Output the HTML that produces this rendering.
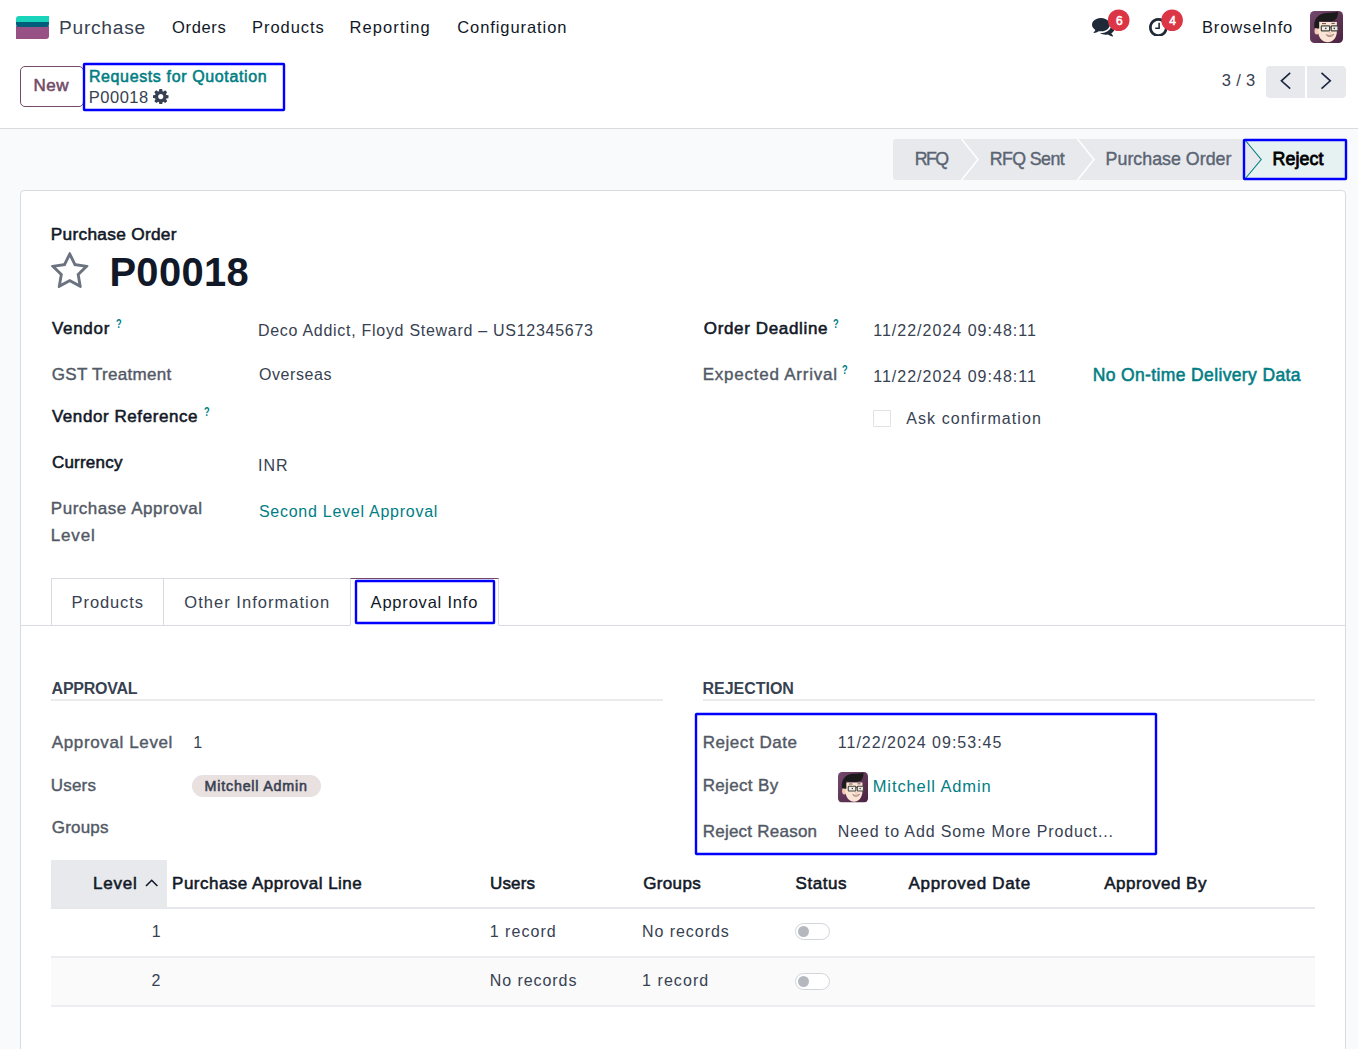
<!DOCTYPE html>
<html lang="en">
<head>
<meta charset="utf-8">
<title>Odoo - P00018</title>
<style>
*{box-sizing:border-box;margin:0;padding:0}
html,body{width:1358px;height:1049px;overflow:hidden}
body{position:relative;background:#f9fafb;font-family:"Liberation Sans",sans-serif;color:#374151}
.abs,.t,svg{position:absolute}
.t{white-space:pre;line-height:20px;display:block}
.top{left:0;top:0;width:1358px;height:128px;background:#fff}
.hline{left:0;top:128px;width:1358px;height:1px;background:#d9dbde}
.btn-new{left:20px;top:66px;width:64px;height:41px;border:1px solid #714B67;border-radius:5px;background:#fff}
.pgbtn{top:66px;height:32px;width:39px;background:#e7e9ed}
.sheet{left:20px;top:190px;width:1326px;height:900px;background:#fff;border:1px solid #d9dbe0;border-radius:4px}
.tab{top:578px;height:48px;border:1px solid #d9dbe0;background:#fff}
.uline{height:1px;background:#d9dbe0}
.tag{left:192px;top:775px;width:129px;height:22px;border-radius:12px;background:#e9e0e0}
.chk{left:873px;top:410px;width:18px;height:17px;border:1px solid #dfe1e5;border-radius:1px;background:#fff}
.tog{left:795px;width:35px;height:17px;border:1px solid #d1d5db;border-radius:9px;background:#fff}
.tog i{position:absolute;left:2px;top:2px;width:11px;height:11px;border-radius:50%;background:#b5b9bf}
</style>
</head>
<body>
<!-- ===== top bars ===== -->
<div class="abs top"></div>
<div class="abs hline"></div>
<div class="abs sheet"></div>

<!-- app logo -->
<svg style="left:16px;top:16px" width="33" height="23" viewBox="0 0 33 23">
  <path d="M0 10 H33 V20 a3 3 0 0 1 -3 3 H0 Z" fill="#985184"/>
  <path d="M0 5 H33 V8 a3 3 0 0 1 -3 3 H3 a3 3 0 0 1 -3 -3 Z" fill="#005E7A"/>
  <path d="M3 0 H33 V6 H0 V3 a3 3 0 0 1 3 -3 Z" fill="#1AD3BB"/>
</svg>

<!-- systray icons -->
<svg style="left:1092.1px;top:18.3px" width="22.70" height="18.40" viewBox="0.0 256.0 1792.0 1408.1" preserveAspectRatio="none"><path fill="#1f2937" d="M1408 768q0 139-94 257t-256.500 186.500-353.500 68.500q-86 0-176-16-124 88-278 128-36 9-86 16h-3q-11 0-20.500-8t-11.500-21q-1-3-1-6.500t.5-6.500 2-6l2.500-5t3.500-5.500 4-5 4.500-5 4-4.500q5-6 23-25t26-29.500 22.500-29 25-38.500 20.500-44q-124-72-195-177t-71-224q0-139 94-257t256.500-186.500 353.500-68.500 353.500 68.500 256.500 186.500 94 257zm384 256q0 120-71 224.500t-195 176.500q10 24 20.500 44t25 38.500 22.500 29 26 29.500 23 25q1 1 4 4.500t4.500 5 4 5 3.500 5.500l2.500 5t2 6 .5 6.500-1 6.500q-3 14-13 22t-22 7q-50-7-86-16-154-40-278-128-90 16-176 16-271 0-472-132 58 4 88 4 161 0 309-45t264-129q125-92 192-212t67-254q0-77-23-152 129 71 204 178t75 230z"/></svg>
<svg style="left:1148.6px;top:17.6px" width="18.70" height="18.90" viewBox="128.0 128.0 1536.0 1536.0" preserveAspectRatio="none"><path fill="#1f2937" d="M1024 544v448q0 14-9 23t-23 9h-320q-14 0-23-9t-9-23v-64q0-14 9-23t23-9h224v-352q0-14 9-23t23-9h64q14 0 23 9t9 23zm416 352q0-148-73-273t-198-198-273-73-273 73-198 198-73 273 73 273 198 198 273 73 273-73 198-198 73-273zm224 0q0 209-103 385.500t-279.500 279.500-385.500 103-385.500-103-279.500-279.500-103-385.500 103-385.500 279.500-279.500 385.500-103 385.500 103 279.500 279.500 103 385.500z"/></svg>
<svg style="left:153.1px;top:88.9px" width="15.50" height="15.30" viewBox="128.0 128.0 1536.0 1536.0" preserveAspectRatio="none"><path fill="#374151" d="M1152 896q0-106-75-181t-181-75-181 75-75 181 75 181 181 75 181-75 75-181zm512-109v222q0 12-8 23t-20 13l-185 28q-19 54-39 91 35 50 107 138 10 12 10 25t-9 23q-27 37-99 108t-94 71q-12 0-26-9l-138-108q-44 23-91 38-16 136-29 186-7 28-36 28h-222q-14 0-24.500-8.500t-11.500-21.500l-28-184q-49-16-90-37l-141 107q-10 9-25 9-14 0-25-11-126-114-165-168-7-10-7-23 0-12 8-23 15-21 51-66.500t54-70.500q-27-50-41-99l-183-27q-13-2-21-12.500t-8-23.500v-222q0-12 8-23t19-13l186-28q14-46 39-92-40-57-107-138-10-12-10-24 0-10 9-23 26-36 98.500-107.500t94.500-71.500q13 0 26 10l138 107q44-23 91-38 16-136 29-186 7-28 36-28h222q14 0 24.500 8.500t11.500 21.500l28 184q49 16 90 37l142-107q9-9 24-9 13 0 25 10 129 119 165 170 7 8 7 22 0 12-8 23-15 21-51 66.500t-54 70.500q26 50 41 98l183 28q13 2 21 12.500t8 23.500z"/></svg>
<svg style="left:51.2px;top:252.0px" width="37.50" height="36.00" viewBox="64.0 32.0 1664.0 1587.0" preserveAspectRatio="none"><path fill="#6b7280" d="M1201 1004l306-297-422-62-189-382-189 382-422 62 306 297-73 421 378-199 377 199zm527-357q0 22-26 48l-363 354 86 500q1 7 1 20 0 50-41 50-19 0-40-12l-449-236-449 236q-22 12-40 12-21 0-31.500-14.500t-10.500-35.500q0-6 2-20l86-500-364-354q-25-27-25-48 0-37 56-46l502-73 225-455q19-41 49-41t49 41l225 455 502 73q56 9 56 46z"/></svg>
<svg style="left:1100px;top:5px" width="90" height="32" viewBox="0 0 90 32">
  <circle cx="18.700" cy="15.250" r="10.800" fill="#dc3545"/>
  <circle cx="72.100" cy="15.250" r="10.800" fill="#dc3545"/>
</svg>

<!-- user avatar -->
<svg style="left:1310px;top:11px" width="33" height="32" viewBox="0 0 33 32">
  <defs>
    <linearGradient id="avbg" x1="0" y1="0" x2="1" y2="1"><stop offset="0" stop-color="#74496f"/><stop offset="1" stop-color="#4b223e"/></linearGradient>
    <clipPath id="avclip"><rect width="33" height="32" rx="4.500"/></clipPath>
    <g id="avface" clip-path="url(#avclip)">
      <rect width="33" height="32" fill="url(#avbg)"/>
      <ellipse cx="6.900" cy="20" rx="2.400" ry="3.500" fill="#f2cbb2"/>
      <path d="M8.200 11 H26.900 V20 C26.900 27 22.500 31.300 17.700 31.300 C12.600 31.300 8.200 27 8.200 20 Z" fill="#fbe4d3"/>
      <path d="M4.300 16.600 C3.400 8 8 2.600 16 1.900 C21 1.500 25 1.600 27.800 0.400 C28.600 4.200 27 7.600 24.500 9.400 C19 11.200 13 10.600 9.200 9.900 L9.200 17.600 C7 17.600 5 17.300 4.300 16.600 Z" fill="#1b1b1b"/>
      <path d="M12 12.600 h4 M21.500 12.400 h3.300" stroke="#3a2a25" stroke-width="0.800"/>
      <rect x="11.300" y="14.900" width="8.300" height="5" rx="0.700" fill="#f1ebe6" stroke="#45453f" stroke-width="1.200"/>
      <rect x="21.200" y="14.900" width="6.800" height="5" rx="0.700" fill="#f1ebe6" stroke="#45453f" stroke-width="1.200"/>
      <path d="M19.600 16.200 h1.600" stroke="#45453f" stroke-width="1"/>
      <circle cx="15.800" cy="17.400" r="0.800" fill="#3b3b3b"/><circle cx="24.300" cy="17.400" r="0.800" fill="#3b3b3b"/>
      <path d="M18.800 21.700 q1.300 0.700 2.600 0" fill="none" stroke="#e2a995" stroke-width="0.700"/>
      <path d="M16.200 23.700 C18.500 24.900 21.500 24.700 23.700 23.200 C22.600 26 18 26.500 16.200 23.700 Z" fill="#fff" stroke="#7d4d44" stroke-width="0.600"/>
    </g>
  </defs>
  <use href="#avface"/>
</svg>

<!-- control panel -->
<div class="abs btn-new"></div>
<div class="abs pgbtn" style="left:1266px;border-radius:4px 0 0 4px"></div>
<div class="abs pgbtn" style="left:1307px;border-radius:0 4px 4px 0"></div>
<svg style="left:1266px;top:66px" width="80" height="32" viewBox="0 0 80 32">
  <path d="M24.200 6.900 L15.400 14.800 L24.200 22.700" fill="none" stroke="#1b2440" stroke-width="1.600"/>
  <path d="M55.500 6.900 L64.300 14.800 L55.500 22.700" fill="none" stroke="#1b2440" stroke-width="1.600"/>
</svg>

<!-- status bar -->
<svg style="left:893px;top:139px" width="454" height="41" viewBox="0 0 454 41">
  <path d="M3 0 H372 V41 H3 a3 3 0 0 1 -3 -3 V3 a3 3 0 0 1 3 -3 Z" fill="#e7e9ed"/>
  <path d="M352.400 0 L368.200 20.500 L352.400 41 H454 V0 Z" fill="#e6f1f2"/>
  <path d="M68.500 0 L85 20.500 L68.500 41" fill="none" stroke="#fff" stroke-width="1.500"/>
  <path d="M184.500 0 L201 20.500 L184.500 41" fill="none" stroke="#fff" stroke-width="1.500"/>
  <path d="M352.400 1.500 L368.200 20.500 L352.400 39.500" fill="none" stroke="#017e84" stroke-width="1.100"/>
</svg>

<!-- form sheet -->
<div class="abs chk"></div>

<!-- notebook tabs -->
<div class="abs uline" style="left:21px;top:625px;width:1324px"></div>
<div class="abs tab" style="left:51px;width:113px"></div>
<div class="abs tab" style="left:163px;width:188px"></div>
<div class="abs tab" style="left:350px;width:149px;border-top:1px solid #714B67;border-bottom-color:#fff"></div>

<!-- group separators -->
<div class="abs uline" style="left:51px;top:699px;width:612px;height:2px;background:#ebebed"></div>
<div class="abs uline" style="left:703px;top:699px;width:612px;height:2px;background:#ebebed"></div>
<div class="abs tag"></div>

<!-- small avatar -->
<svg style="left:838px;top:772px" width="30" height="30.500" viewBox="0 0 33 32" preserveAspectRatio="none">
  <use href="#avface"/>
</svg>

<!-- approval lines table -->
<div class="abs" style="left:51px;top:860px;width:116px;height:47px;background:#e7e9ed"></div>
<div class="abs" style="left:51px;top:958px;width:1264px;height:48px;background:#fafafa"></div>
<div class="abs uline" style="left:51px;top:907px;width:1264px;height:2px;background:#e6e8ec"></div>
<div class="abs uline" style="left:51px;top:956px;width:1264px;height:2px;background:#ecedf0"></div>
<div class="abs uline" style="left:51px;top:1005px;width:1264px;height:2px;background:#ecedf0"></div>
<svg style="left:144px;top:877px" width="16" height="12" viewBox="0 0 16 12">
  <path d="M2 9 L7.700 3.300 L13.400 9" fill="none" stroke="#111827" stroke-width="1.600"/>
</svg>
<div class="abs tog" style="top:923px"><i></i></div>
<div class="abs tog" style="top:972.500px"><i></i></div>

<!-- highlight outlines -->
<svg style="left:0;top:0" width="1358" height="1049" viewBox="0 0 1358 1049" fill="none" stroke="#0000ff" stroke-width="2.4" stroke-linejoin="round">
  <rect x="84" y="64" width="200" height="46" rx="0.5"/>
  <rect x="1244" y="140" width="102" height="39" rx="0.5"/>
  <rect x="356" y="581" width="138" height="42" rx="0.5"/>
  <rect x="696" y="714" width="460" height="140" rx="0.5"/>
</svg>

<!-- ===== text ===== -->
<span class="t" style="left:59.00px;top:18px;font-size:19.2px;color:#374151;letter-spacing:0.730px;">Purchase</span>
<span class="t" style="left:172.00px;top:17px;font-size:16.5px;color:#111827;letter-spacing:0.665px;">Orders</span>
<span class="t" style="left:252.00px;top:17px;font-size:16.5px;color:#111827;letter-spacing:0.948px;">Products</span>
<span class="t" style="left:349.50px;top:17px;font-size:16.5px;color:#111827;letter-spacing:1.092px;">Reporting</span>
<span class="t" style="left:457.20px;top:17px;font-size:16.5px;color:#111827;letter-spacing:0.928px;">Configuration</span>
<span class="t" style="left:1202.00px;top:17px;font-size:16.5px;color:#111827;letter-spacing:0.860px;">BrowseInfo</span>
<span class="t" style="left:1115.88px;top:11px;font-size:12px;color:#fff;-webkit-text-stroke:0.55px;">6</span>
<span class="t" style="left:1169.18px;top:11px;font-size:12px;color:#fff;-webkit-text-stroke:0.55px;">4</span>
<span class="t" style="left:33.48px;top:76px;font-size:17px;color:#714B67;letter-spacing:0.559px;-webkit-text-stroke:0.55px;">New</span>
<span class="t" style="left:88.88px;top:67px;font-size:16px;color:#017e84;letter-spacing:0.629px;-webkit-text-stroke:0.55px;">Requests for Quotation</span>
<span class="t" style="left:88.80px;top:87px;font-size:16.5px;color:#374151;letter-spacing:0.498px;">P00018</span>
<span class="t" style="left:1221.70px;top:70px;font-size:16.5px;color:#374151;letter-spacing:0.368px;">3 / 3</span>
<span class="t" style="left:914.70px;top:149px;font-size:17.8px;color:#5b6472;letter-spacing:-1.551px;-webkit-text-stroke:0.4px;">RFQ</span>
<span class="t" style="left:989.70px;top:149px;font-size:17.8px;color:#5b6472;letter-spacing:-0.587px;-webkit-text-stroke:0.4px;">RFQ Sent</span>
<span class="t" style="left:1105.60px;top:149px;font-size:17.8px;color:#5b6472;letter-spacing:0.024px;-webkit-text-stroke:0.4px;">Purchase Order</span>
<span class="t" style="left:1272.50px;top:149px;font-size:17.8px;color:#000;letter-spacing:0.108px;-webkit-text-stroke:0.8px;">Reject</span>
<span class="t" style="left:50.77px;top:224px;font-size:17.3px;color:#111827;letter-spacing:0.286px;-webkit-text-stroke:0.55px;">Purchase Order</span>
<span class="t" style="left:109.40px;top:262px;font-size:39.9px;color:#111827;letter-spacing:0.350px;font-weight:700;">P00018</span>
<span class="t" style="left:51.88px;top:319px;font-size:17px;color:#111827;letter-spacing:0.726px;-webkit-text-stroke:0.55px;">Vendor</span>
<span class="t" style="left:116.00px;top:314px;font-size:12.2px;color:#017e84;font-weight:700;transform:scaleX(.76);transform-origin:0 0;">?</span>
<span class="t" style="left:257.90px;top:321px;font-size:16px;color:#374151;letter-spacing:0.718px;">Deco Addict, Floyd Steward – US12345673</span>
<span class="t" style="left:51.80px;top:365px;font-size:17px;color:#525966;letter-spacing:0.284px;-webkit-text-stroke:0.4px;">GST Treatment</span>
<span class="t" style="left:258.90px;top:365px;font-size:16px;color:#374151;letter-spacing:0.590px;">Overseas</span>
<span class="t" style="left:51.88px;top:407px;font-size:17px;color:#111827;letter-spacing:0.571px;-webkit-text-stroke:0.55px;">Vendor Reference</span>
<span class="t" style="left:203.80px;top:402px;font-size:12.2px;color:#017e84;font-weight:700;transform:scaleX(.76);transform-origin:0 0;">?</span>
<span class="t" style="left:51.88px;top:453px;font-size:17px;color:#111827;letter-spacing:0.227px;-webkit-text-stroke:0.55px;">Currency</span>
<span class="t" style="left:257.90px;top:456px;font-size:16px;color:#374151;letter-spacing:1.050px;">INR</span>
<span class="t" style="left:50.80px;top:499px;font-size:17px;color:#525966;letter-spacing:0.528px;-webkit-text-stroke:0.4px;">Purchase Approval</span>
<span class="t" style="left:50.80px;top:526px;font-size:17px;color:#525966;letter-spacing:0.809px;-webkit-text-stroke:0.4px;">Level</span>
<span class="t" style="left:258.90px;top:502px;font-size:16px;color:#017e84;letter-spacing:0.740px;">Second Level Approval</span>
<span class="t" style="left:703.77px;top:319px;font-size:17px;color:#111827;letter-spacing:0.648px;-webkit-text-stroke:0.55px;">Order Deadline</span>
<span class="t" style="left:832.60px;top:314px;font-size:12.2px;color:#017e84;font-weight:700;transform:scaleX(.76);transform-origin:0 0;">?</span>
<span class="t" style="left:873.20px;top:321px;font-size:16px;color:#374151;letter-spacing:1.015px;">11/22/2024 09:48:11</span>
<span class="t" style="left:702.70px;top:365px;font-size:17px;color:#525966;letter-spacing:0.760px;-webkit-text-stroke:0.4px;">Expected Arrival</span>
<span class="t" style="left:842.30px;top:360px;font-size:12.2px;color:#017e84;font-weight:700;transform:scaleX(.76);transform-origin:0 0;">?</span>
<span class="t" style="left:873.20px;top:367px;font-size:16px;color:#374151;letter-spacing:1.015px;">11/22/2024 09:48:11</span>
<span class="t" style="left:1092.68px;top:365px;font-size:17.5px;color:#017e84;letter-spacing:0.366px;-webkit-text-stroke:0.55px;">No On-time Delivery Data</span>
<span class="t" style="left:906.20px;top:409px;font-size:16px;color:#374151;letter-spacing:1.096px;">Ask confirmation</span>
<span class="t" style="left:71.60px;top:592px;font-size:16.5px;color:#374151;letter-spacing:0.891px;">Products</span>
<span class="t" style="left:184.30px;top:592px;font-size:16.5px;color:#374151;letter-spacing:1.030px;">Other Information</span>
<span class="t" style="left:370.60px;top:592px;font-size:16.5px;color:#111827;letter-spacing:0.796px;">Approval Info</span>
<span class="t" style="left:51.60px;top:679px;font-size:16px;color:#374151;letter-spacing:-0.263px;font-weight:700;">APPROVAL</span>
<span class="t" style="left:702.50px;top:679px;font-size:16px;color:#374151;letter-spacing:-0.027px;font-weight:700;">REJECTION</span>
<span class="t" style="left:51.80px;top:733px;font-size:17px;color:#525966;letter-spacing:0.624px;-webkit-text-stroke:0.4px;">Approval Level</span>
<span class="t" style="left:193.30px;top:733px;font-size:16px;color:#374151;">1</span>
<span class="t" style="left:50.80px;top:776px;font-size:17px;color:#525966;letter-spacing:0.177px;-webkit-text-stroke:0.4px;">Users</span>
<span class="t" style="left:204.58px;top:776px;font-size:14.3px;color:#374151;letter-spacing:0.780px;-webkit-text-stroke:0.55px;">Mitchell Admin</span>
<span class="t" style="left:51.80px;top:818px;font-size:17px;color:#525966;letter-spacing:0.190px;-webkit-text-stroke:0.4px;">Groups</span>
<span class="t" style="left:702.70px;top:733px;font-size:17px;color:#525966;letter-spacing:0.554px;-webkit-text-stroke:0.4px;">Reject Date</span>
<span class="t" style="left:837.80px;top:733px;font-size:16px;color:#374151;letter-spacing:0.999px;">11/22/2024 09:53:45</span>
<span class="t" style="left:702.70px;top:776px;font-size:17px;color:#525966;letter-spacing:0.344px;-webkit-text-stroke:0.4px;">Reject By</span>
<span class="t" style="left:872.70px;top:776px;font-size:16.5px;color:#017e84;letter-spacing:0.900px;">Mitchell Admin</span>
<span class="t" style="left:702.70px;top:822px;font-size:17px;color:#525966;letter-spacing:0.238px;-webkit-text-stroke:0.4px;">Reject Reason</span>
<span class="t" style="left:837.80px;top:822px;font-size:16px;color:#374151;letter-spacing:0.872px;">Need to Add Some More Product...</span>
<span class="t" style="left:92.88px;top:874px;font-size:17px;color:#111827;letter-spacing:0.797px;-webkit-text-stroke:0.55px;">Level</span>
<span class="t" style="left:172.08px;top:874px;font-size:17px;color:#111827;letter-spacing:0.481px;-webkit-text-stroke:0.55px;">Purchase Approval Line</span>
<span class="t" style="left:489.97px;top:874px;font-size:17px;color:#111827;letter-spacing:0.164px;-webkit-text-stroke:0.55px;">Users</span>
<span class="t" style="left:643.27px;top:874px;font-size:17px;color:#111827;letter-spacing:0.340px;-webkit-text-stroke:0.55px;">Groups</span>
<span class="t" style="left:795.57px;top:874px;font-size:17px;color:#111827;letter-spacing:0.551px;-webkit-text-stroke:0.55px;">Status</span>
<span class="t" style="left:908.48px;top:874px;font-size:17px;color:#111827;letter-spacing:0.692px;-webkit-text-stroke:0.55px;">Approved Date</span>
<span class="t" style="left:1104.18px;top:874px;font-size:17px;color:#111827;letter-spacing:0.492px;-webkit-text-stroke:0.55px;">Approved By</span>
<span class="t" style="left:151.70px;top:922px;font-size:16px;color:#374151;">1</span>
<span class="t" style="left:489.70px;top:922px;font-size:16px;color:#374151;letter-spacing:1.043px;">1 record</span>
<span class="t" style="left:642.00px;top:922px;font-size:16px;color:#374151;letter-spacing:0.950px;">No records</span>
<span class="t" style="left:151.50px;top:971px;font-size:16px;color:#374151;">2</span>
<span class="t" style="left:489.70px;top:971px;font-size:16px;color:#374151;letter-spacing:0.939px;">No records</span>
<span class="t" style="left:642.00px;top:971px;font-size:16px;color:#374151;letter-spacing:1.072px;">1 record</span>
</body>
</html>
